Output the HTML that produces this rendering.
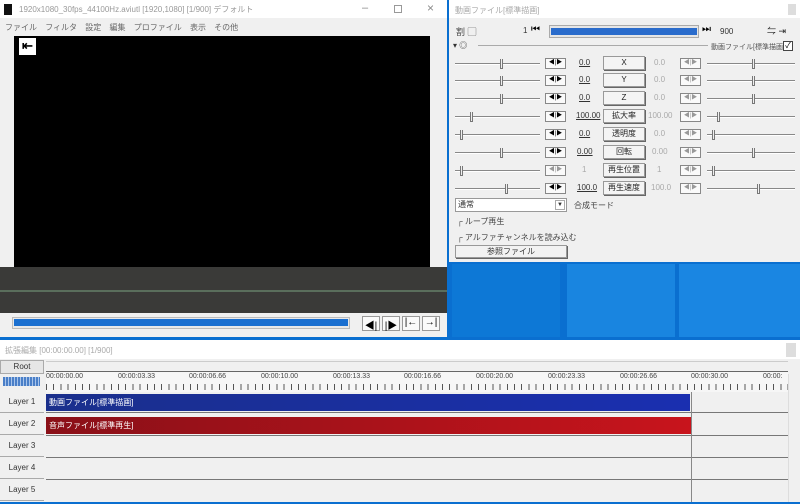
<!DOCTYPE html>
<html><head><meta charset="utf-8"><style>
*{margin:0;padding:0;box-sizing:border-box}
body{width:800px;height:504px;overflow:hidden;background:#0a6fd0;font-family:"Liberation Sans","Noto Sans CJK JP",sans-serif;font-size:8px;color:#333;position:relative}
div{position:absolute}
.t{color:#8a8a8a;font-size:8px;white-space:nowrap}
.sl{height:2px;background:#888;border-bottom:1px solid #fff}
.th{width:3px;height:10px;border:1px solid #777;border-top:none;background:#f0f0f0}
.ab{width:21px;height:11px;border:1px solid #888;background:#fafafa;font-size:6px;line-height:9px;text-align:center;color:#000}
.bt{width:42px;height:14px;border:1px solid #999;background:#f4f4f4;font-size:8px;line-height:12px;text-align:center;color:#222;box-shadow:1px 1px 0 #666}
.v{font-size:8px;text-decoration:underline;color:#333}
.lay{left:0;width:44px;height:21px;background:#f0f0f0;border-bottom:1px solid #aaa;font-size:8px;text-align:center;line-height:20px;color:#333}
.hl{left:46px;width:742px;height:1px;background:#777}
</style></head><body>
<div style="left:0;top:0;width:447px;height:337px;background:#f0f0f0"></div>
<div style="left:0;top:0;width:447px;height:18px;background:#fff"></div>
<div style="left:4px;top:4px;width:8px;height:11px;background:#111"></div>
<div class="t" style="left:19px;top:4px;color:#999">1920x1080_30fps_44100Hz.aviutl [1920,1080] [1/900] デフォルト</div>
<div class="t" style="left:362px;top:2px;font-size:11px">–</div>
<div style="left:394px;top:5px;width:8px;height:8px;border:1px solid #999"></div>
<div class="t" style="left:427px;top:1px;font-size:12px">×</div>
<div class="t" style="left:5px;top:22px;color:#666;word-spacing:6px">ファイル フィルタ 設定 編集 プロファイル 表示 その他</div>
<div style="left:14px;top:36px;width:416px;height:231px;background:#000"></div>
<div style="left:19px;top:38px;width:17px;height:17px;background:#fff;color:#000;font-size:13px;line-height:16px;text-align:center;font-weight:bold">⇤</div>
<div style="left:0;top:267px;width:447px;height:47px;background:#3a3a38"></div>
<div style="left:0;top:290px;width:447px;height:2px;background:#5a6e5c"></div>
<div style="left:0;top:313px;width:447px;height:24px;background:#f0f0f0"></div>
<div style="left:12px;top:317px;width:338px;height:12px;background:#e8e8e8;border:1px solid #bbb"></div>
<div style="left:14px;top:319px;width:334px;height:7px;background:#1a6fd0"></div>
<div style="left:362px;top:316px;width:80px;height:15px;display:flex;gap:2px">
<span style="width:18px;border:1px solid #999;background:#fafafa;text-align:center;font-size:10px;color:#000">◀|</span><span style="width:18px;border:1px solid #999;background:#fafafa;text-align:center;font-size:10px;color:#000">|▶</span><span style="width:18px;border:1px solid #999;background:#fafafa;text-align:center;font-size:10px;color:#000">|←</span><span style="width:18px;border:1px solid #999;background:#fafafa;text-align:center;font-size:10px;color:#000">→|</span></div>
<div style="left:452px;top:264px;width:108px;height:73px;background:#0d78d6"></div>
<div style="left:567px;top:264px;width:108px;height:73px;background:#1985e0"></div>
<div style="left:679px;top:264px;width:121px;height:73px;background:#1a86e2"></div>
<div style="left:449px;top:0;width:351px;height:262px;background:#f0f0f0"></div>
<div style="left:449px;top:0;width:351px;height:18px;background:#fff"></div>
<div class="t" style="left:455px;top:5px;color:#aaa">動画ファイル[標準描画]</div>
<div style="left:788px;top:4px;width:8px;height:11px;background:#ddd"></div>
<div class="t" style="left:456px;top:25px;color:#444;font-size:9px">割 ▢</div>
<div class="t" style="left:523px;top:26px;color:#333">1</div>
<div class="t" style="left:531px;top:24px;color:#000;font-size:10px">⏮</div>
<div style="left:549px;top:25px;width:150px;height:13px;background:#e6e6e6;border:1px solid #aaa"></div>
<div style="left:551px;top:28px;width:146px;height:7px;background:#2a6ccc"></div>
<div class="t" style="left:702px;top:24px;color:#000;font-size:10px">⏭</div>
<div class="t" style="left:720px;top:27px;color:#333">900</div>
<div class="t" style="left:767px;top:24px;color:#222;font-size:9px">⇋ ⇥</div>
<div class="t" style="left:453px;top:40px;color:#333">▾ ◎</div>
<div style="left:478px;top:45px;width:230px;height:1px;background:#aaa"></div>
<div class="t" style="left:711px;top:42px;color:#555;font-size:7px">動画ファイル[標準描画]</div>
<div style="left:783px;top:41px;width:10px;height:10px;border:1px solid #444;background:#fff;font-size:8px;line-height:8px;text-align:center;color:#000">✓</div>

<div style="left:455px;top:63px">
<div class="sl" style="left:0;top:0;width:85px"></div><div class="th" style="left:45px;top:-4px"></div>
<div class="ab" style="left:90px;top:-5px">◀|▶</div><div class="v" style="left:124px;top:-5px">0.0</div>
<div class="bt" style="left:148px;top:-7px">X</div><div class="t" style="left:199px;top:-5px;color:#aaa">0.0</div>
<div class="ab" style="left:225px;top:-5px;color:#999">◀|▶</div>
<div class="sl" style="left:252px;top:0;width:88px"></div><div class="th" style="left:297px;top:-4px"></div>
</div>
<div style="left:455px;top:80px">
<div class="sl" style="left:0;top:0;width:85px"></div><div class="th" style="left:45px;top:-4px"></div>
<div class="ab" style="left:90px;top:-5px">◀|▶</div><div class="v" style="left:124px;top:-5px">0.0</div>
<div class="bt" style="left:148px;top:-7px">Y</div><div class="t" style="left:199px;top:-5px;color:#aaa">0.0</div>
<div class="ab" style="left:225px;top:-5px;color:#999">◀|▶</div>
<div class="sl" style="left:252px;top:0;width:88px"></div><div class="th" style="left:297px;top:-4px"></div>
</div>
<div style="left:455px;top:98px">
<div class="sl" style="left:0;top:0;width:85px"></div><div class="th" style="left:45px;top:-4px"></div>
<div class="ab" style="left:90px;top:-5px">◀|▶</div><div class="v" style="left:124px;top:-5px">0.0</div>
<div class="bt" style="left:148px;top:-7px">Z</div><div class="t" style="left:199px;top:-5px;color:#aaa">0.0</div>
<div class="ab" style="left:225px;top:-5px;color:#999">◀|▶</div>
<div class="sl" style="left:252px;top:0;width:88px"></div><div class="th" style="left:297px;top:-4px"></div>
</div>
<div style="left:455px;top:116px">
<div class="sl" style="left:0;top:0;width:85px"></div><div class="th" style="left:15px;top:-4px"></div>
<div class="ab" style="left:90px;top:-5px">◀|▶</div><div class="v" style="left:121px;top:-5px">100.00</div>
<div class="bt" style="left:148px;top:-7px">拡大率</div><div class="t" style="left:193px;top:-5px;color:#aaa">100.00</div>
<div class="ab" style="left:225px;top:-5px;color:#999">◀|▶</div>
<div class="sl" style="left:252px;top:0;width:88px"></div><div class="th" style="left:262px;top:-4px"></div>
</div>
<div style="left:455px;top:134px">
<div class="sl" style="left:0;top:0;width:85px"></div><div class="th" style="left:5px;top:-4px"></div>
<div class="ab" style="left:90px;top:-5px">◀|▶</div><div class="v" style="left:124px;top:-5px">0.0</div>
<div class="bt" style="left:148px;top:-7px">透明度</div><div class="t" style="left:199px;top:-5px;color:#aaa">0.0</div>
<div class="ab" style="left:225px;top:-5px;color:#999">◀|▶</div>
<div class="sl" style="left:252px;top:0;width:88px"></div><div class="th" style="left:257px;top:-4px"></div>
</div>
<div style="left:455px;top:152px">
<div class="sl" style="left:0;top:0;width:85px"></div><div class="th" style="left:45px;top:-4px"></div>
<div class="ab" style="left:90px;top:-5px">◀|▶</div><div class="v" style="left:122px;top:-5px">0.00</div>
<div class="bt" style="left:148px;top:-7px">回転</div><div class="t" style="left:197px;top:-5px;color:#aaa">0.00</div>
<div class="ab" style="left:225px;top:-5px;color:#999">◀|▶</div>
<div class="sl" style="left:252px;top:0;width:88px"></div><div class="th" style="left:297px;top:-4px"></div>
</div>
<div style="left:455px;top:170px">
<div class="sl" style="left:0;top:0;width:85px"></div><div class="th" style="left:5px;top:-4px"></div>
<div class="ab" style="left:90px;top:-5px;color:#999">◀|▶</div><div class="t" style="left:127px;top:-5px;color:#aaa">1</div>
<div class="bt" style="left:148px;top:-7px">再生位置</div><div class="t" style="left:202px;top:-5px;color:#aaa">1</div>
<div class="ab" style="left:225px;top:-5px;color:#999">◀|▶</div>
<div class="sl" style="left:252px;top:0;width:88px"></div><div class="th" style="left:257px;top:-4px"></div>
</div>
<div style="left:455px;top:188px">
<div class="sl" style="left:0;top:0;width:85px"></div><div class="th" style="left:50px;top:-4px"></div>
<div class="ab" style="left:90px;top:-5px">◀|▶</div><div class="v" style="left:122px;top:-5px">100.0</div>
<div class="bt" style="left:148px;top:-7px">再生速度</div><div class="t" style="left:196px;top:-5px;color:#aaa">100.0</div>
<div class="ab" style="left:225px;top:-5px;color:#999">◀|▶</div>
<div class="sl" style="left:252px;top:0;width:88px"></div><div class="th" style="left:302px;top:-4px"></div>
</div>
<div style="left:455px;top:198px;width:112px;height:14px;background:#fff;border:1px solid #999;font-size:8px;line-height:12px;padding-left:2px;color:#333">通常<span style="position:absolute;right:1px;top:1px;width:10px;height:10px;border:1px solid #aaa;font-size:6px;line-height:9px;text-align:center">▼</span></div>
<div class="t" style="left:574px;top:200px;color:#444">合成モード</div>
<div class="t" style="left:457px;top:216px;color:#444">┌ ループ再生</div>
<div class="t" style="left:457px;top:232px;color:#444">┌ アルファチャンネルを読み込む</div>
<div style="left:455px;top:245px;width:112px;height:13px;background:#f2f2f2;border:1px solid #999;box-shadow:1px 1px 0 #666;font-size:8px;line-height:11px;text-align:center;color:#333">参照ファイル</div>

<div style="left:0;top:340px;width:800px;height:164px;background:#f0f0f0"></div>
<div style="left:0;top:340px;width:800px;height:19px;background:#fff"></div>
<div class="t" style="left:5px;top:345px;color:#aaa">拡張編集 [00:00:00.00] [1/900]</div>
<div style="left:786px;top:343px;width:10px;height:14px;background:#ddd"></div>
<div style="left:0;top:360px;width:44px;height:14px;background:#e6e6e6;border:1px solid #aaa;text-align:center;font-size:8px;line-height:12px;color:#333">Root</div>
<div style="left:3px;top:377px;width:37px;height:9px;background:repeating-linear-gradient(90deg,#4a7fc8 0 2px,#a8c4ea 2px 3px)"></div>
<div style="left:46px;top:361px;width:742px;height:1px;background:#ccc"></div>
<div style="left:46px;top:371px;width:742px;height:1px;background:#666"></div>
<div style="left:46px;top:372px;width:742px;height:20px;background:#f6f6f6"></div>
<div style="left:46px;top:384px;width:742px;height:6px;background:repeating-linear-gradient(90deg,#555 0 1px,transparent 1px 7.2px)"></div>
<div class="t" style="left:46px;top:373px;color:#444;font-size:7px">00:00:00.00</div>
<div class="t" style="left:118px;top:373px;color:#444;font-size:7px">00:00:03.33</div>
<div class="t" style="left:189px;top:373px;color:#444;font-size:7px">00:00:06.66</div>
<div class="t" style="left:261px;top:373px;color:#444;font-size:7px">00:00:10.00</div>
<div class="t" style="left:333px;top:373px;color:#444;font-size:7px">00:00:13.33</div>
<div class="t" style="left:404px;top:373px;color:#444;font-size:7px">00:00:16.66</div>
<div class="t" style="left:476px;top:373px;color:#444;font-size:7px">00:00:20.00</div>
<div class="t" style="left:548px;top:373px;color:#444;font-size:7px">00:00:23.33</div>
<div class="t" style="left:620px;top:373px;color:#444;font-size:7px">00:00:26.66</div>
<div class="t" style="left:691px;top:373px;color:#444;font-size:7px">00:00:30.00</div>
<div class="t" style="left:763px;top:373px;color:#444;font-size:7px">00:00:</div>
<div class="lay" style="top:392px">Layer 1</div>
<div class="lay" style="top:414px">Layer 2</div>
<div class="lay" style="top:436px">Layer 3</div>
<div class="lay" style="top:458px">Layer 4</div>
<div class="lay" style="top:480px">Layer 5</div>
<div class="hl" style="top:412px"></div><div class="hl" style="top:435px"></div><div class="hl" style="top:457px"></div><div class="hl" style="top:479px"></div>
<div style="left:46px;top:394px;width:644px;height:17px;background:linear-gradient(90deg,#1a2f8c,#1a2fb0);font-size:8px;color:#fff;line-height:17px;padding-left:3px">動画ファイル[標準描画]</div>
<div style="left:46px;top:417px;width:645px;height:17px;background:linear-gradient(90deg,#8a1018,#c8141c);font-size:8px;color:#fff;line-height:17px;padding-left:3px">音声ファイル[標準再生]</div>
<div style="left:691px;top:392px;width:1px;height:110px;background:#888"></div>
<div style="left:788px;top:374px;width:12px;height:128px;background:#f0f0f0;border-left:1px solid #ddd"></div>
<div style="left:0;top:502px;width:800px;height:2px;background:#0a6fd0"></div>
</body></html>
